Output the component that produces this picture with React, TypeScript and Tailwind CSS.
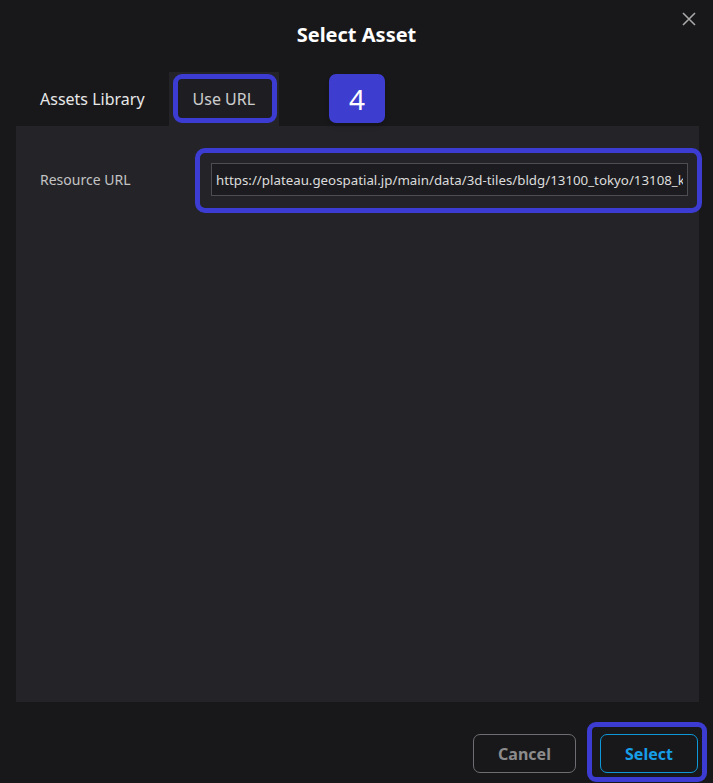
import React from "react";

export default function App() {
  return (
    <div
      className="relative w-[713px] h-[783px] bg-[#18181b] flex flex-col overflow-hidden"
      style={{ fontFamily: '"Noto Sans", "Open Sans", sans-serif' }}
    >
      {/* Header */}
      <div className="h-[72px] flex items-start justify-center pt-[20px]">
        <h1 className="text-[20px] font-bold text-white leading-[30px]">Select Asset</h1>
      </div>
      <button className="absolute right-[16px] top-[11px] w-[16px] h-[16px] text-[#a8a8a8]">
        <svg viewBox="0 0 16 16" width="16" height="16" fill="none" stroke="currentColor" strokeWidth="1.6">
          <path d="M2 2 L14 14 M14 2 L2 14" />
        </svg>
      </button>

      {/* Tabs */}
      <div className="flex px-[16px] h-[54px]">
        <div className="px-[24px] flex items-center text-[16px] text-[#e8e8e8]">Assets Library</div>
        <div className="px-[24px] flex items-center text-[16px] text-[#f0f0f0] bg-[#232328]">Use URL</div>
      </div>

      {/* Panel */}
      <div className="ml-[16px] mr-[14px] h-[576px] bg-[#232328] pt-[37px] pr-[11px]">
        <div className="flex items-center">
          <div className="w-[195px] pl-[24px] text-[14px] text-[#c4c4c4]">Resource URL</div>
          <input
            readOnly
            value="https://plateau.geospatial.jp/main/data/3d-tiles/bldg/13100_tokyo/13108_koto/low_resolution/tileset.json"
            className="flex-1 min-w-0 h-[33px] border border-[#4e4e52] bg-[#1c1c20] px-[4px] text-[13.3px] text-[#dcdcdc] outline-none"
            style={{ fontFamily: '"Noto Sans", "Open Sans", sans-serif' }}
          />
        </div>
      </div>

      {/* Footer */}
      <div className="flex justify-end gap-[24px] pr-[15px] pt-[32px]">
        <button className="w-[103px] h-[39px] rounded-[7px] border border-[#6e6e72] text-[#8c8c8c] text-[16px] font-bold">
          Cancel
        </button>
        <button className="w-[98px] h-[39px] rounded-[7px] border border-[#0e98d8] text-[#169fe8] text-[16px] font-bold">
          Select
        </button>
      </div>

      {/* Annotation overlays */}
      <div className="absolute left-[173px] top-[74px] w-[104px] h-[49px] border-[5px] border-[#3c3cd2] rounded-[9px] bg-black/15 pointer-events-none" />
      <div className="absolute left-[329px] top-[74px] w-[56px] h-[49px] rounded-[7px] bg-[#3d3dd0] flex items-center justify-center text-white text-[28px] leading-none shadow-md">
        4
      </div>
      <div className="absolute left-[195px] top-[148px] w-[507px] h-[65px] border-[5px] border-[#3c3cd2] rounded-[10px] pointer-events-none" />
      <div className="absolute left-[587px] top-[722px] w-[120px] h-[60px] border-[5px] border-[#3c3cd2] rounded-[9px] pointer-events-none" />
    </div>
  );
}
